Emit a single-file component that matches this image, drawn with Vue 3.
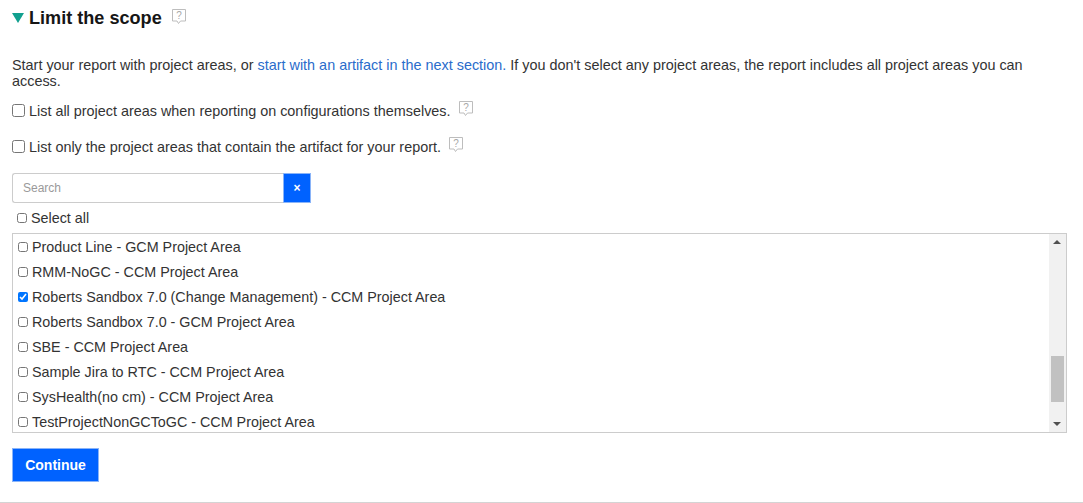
<script setup>
const areas = [
  { label: 'Product Line - GCM Project Area', on: false },
  { label: 'RMM-NoGC - CCM Project Area', on: false },
  { label: 'Roberts Sandbox 7.0 (Change Management) - CCM Project Area', on: true },
  { label: 'Roberts Sandbox 7.0 - GCM Project Area', on: false },
  { label: 'SBE - CCM Project Area', on: false },
  { label: 'Sample Jira to RTC - CCM Project Area', on: false },
  { label: 'SysHealth(no cm) - CCM Project Area', on: false },
  { label: 'TestProjectNonGCToGC - CCM Project Area', on: false },
]
</script>

<template>
  <main class="page">
    <header class="head">
      <span class="tri"></span>
      <h2>Limit the scope</h2>
      <svg class="help help-h" viewBox="0 0 16 18" width="16" height="18"><path d="M1.500 1.500h13v11.500h-5l-2 2.500-1.500-2.500h-4.500z" fill="#fff" stroke="#bdbdbd" /><text x="8" y="11" text-anchor="middle" class="q">?</text></svg>
    </header>
    <p class="intro">Start your report with project areas, or <a>start with an artifact in the next section.</a> If you don't select any project areas, the report includes all project areas you can access.</p>
    <label class="opt first"><input type="checkbox" /><span>List all project areas when reporting on configurations themselves.</span>
      <svg class="help" viewBox="0 0 16 18" width="16" height="18"><path d="M1.500 1.500h13v11.500h-5l-2 2.500-1.500-2.500h-4.500z" fill="#fff" stroke="#bdbdbd" /><text x="8" y="11" text-anchor="middle" class="q">?</text></svg>
    </label>
    <label class="opt second"><input type="checkbox" /><span>List only the project areas that contain the artifact for your report.</span>
      <svg class="help" viewBox="0 0 16 18" width="16" height="18"><path d="M1.500 1.500h13v11.500h-5l-2 2.500-1.500-2.500h-4.500z" fill="#fff" stroke="#bdbdbd" /><text x="8" y="11" text-anchor="middle" class="q">?</text></svg>
    </label>
    <div class="search">
      <input type="text" placeholder="Search" />
      <button class="clear" type="button">×</button>
    </div>
    <label class="all"><input type="checkbox" /><span>Select all</span></label>
    <div class="listbox">
      <ul>
        <li v-for="a in areas" :key="a.label"><input type="checkbox" :checked="a.on" /><span>{{ a.label }}</span></li>
      </ul>
      <div class="scroll">
        <i class="up"></i>
        <b class="thumb"></b>
        <i class="down"></i>
      </div>
    </div>
    <button class="go" type="button">Continue</button>
  </main>
</template>

<style>
html, body { margin: 0; background: #fff; }
</style>

<style scoped>
.page {
  box-sizing: border-box;
  width: 1083px;
  height: 503px;
  padding: 0 16px 0 12px;
  overflow: hidden;
  font-family: "Liberation Sans", Arial, sans-serif;
  font-size: 14.33px;
  color: #222;
  border-bottom: 1px solid #d4d4d4;
}
.head { display: flex; align-items: center; height: 36px; }
.tri {
  width: 0; height: 0; margin-right: 5px; margin-top: -1px;
  border-left: 6px solid transparent;
  border-right: 6px solid transparent;
  border-top: 10px solid #12a08f;
}
h2 { margin: 0; font-size: 18.1px; line-height: 36px; font-weight: 700; color: #161616; }
.help { flex: none; }
.help-h { margin: -3px 0 0 9px; }
.q { font: 10px "Liberation Sans", sans-serif; fill: #a8a8a8; }
.intro { margin: 21px 0 0; font-size: 14.4px; line-height: 16px; color: #333; }
.intro a { color: #2a6ccb; }
.opt { display: flex; align-items: center; height: 20px; font-size: 14.4px; color: #333; }
.opt input { margin: -2px 4px 0 0; width: 13px; height: 13px; }
.opt .help { margin: -4px 0 0 7px; }
.first { margin-top: 12px; }
.second { margin-top: 16px; }
.search { display: flex; width: 299px; height: 30px; margin-top: 16px; }
.search input {
  box-sizing: border-box; flex: 1; min-width: 0; height: 30px; padding: 0 10px;
  border: 1px solid #ccc; border-right: 0; border-radius: 3px 0 0 3px;
  font: 12px "Liberation Sans", sans-serif; outline: none;
}
.search input::placeholder { color: #9a9a9a; opacity: 1; }
.clear {
  width: 28px; height: 30px; padding: 0; border: 1px solid #8ab4f8; background: #0062ff;
  color: #fff; font: 700 12px "Liberation Sans", sans-serif;
}
.all { display: flex; align-items: center; height: 20px; margin: 5px 0 0 5px; color: #333; }
.all input, li input { margin: 0 4px 0 0; width: 10px; height: 10px; }
.listbox {
  display: flex; box-sizing: border-box; height: 200px; margin-top: 5px;
  border: 1px solid #ccc; overflow: hidden;
}
ul { flex: 1; margin: 0; padding: 0 0 0 5px; list-style: none; }
li { display: flex; align-items: center; height: 25px; color: #333; }
.scroll { position: relative; width: 17px; background: #f1f1f1; }
.up, .down { position: absolute; left: 4px; width: 0; height: 0; border-left: 4px solid transparent; border-right: 4px solid transparent; }
.up { top: 6px; border-bottom: 4px solid #505050; }
.down { bottom: 6px; border-top: 4px solid #505050; }
.thumb { position: absolute; left: 2px; top: 122px; width: 13px; height: 46px; background: #c1c1c1; }
.go {
  display: block; box-sizing: border-box; width: 87px; height: 34px; margin-top: 15px; padding: 0;
  border: 1px solid #8ab4f8; background: #0062ff; color: #fff;
  font: 700 14px "Liberation Sans", sans-serif;
}
</style>
